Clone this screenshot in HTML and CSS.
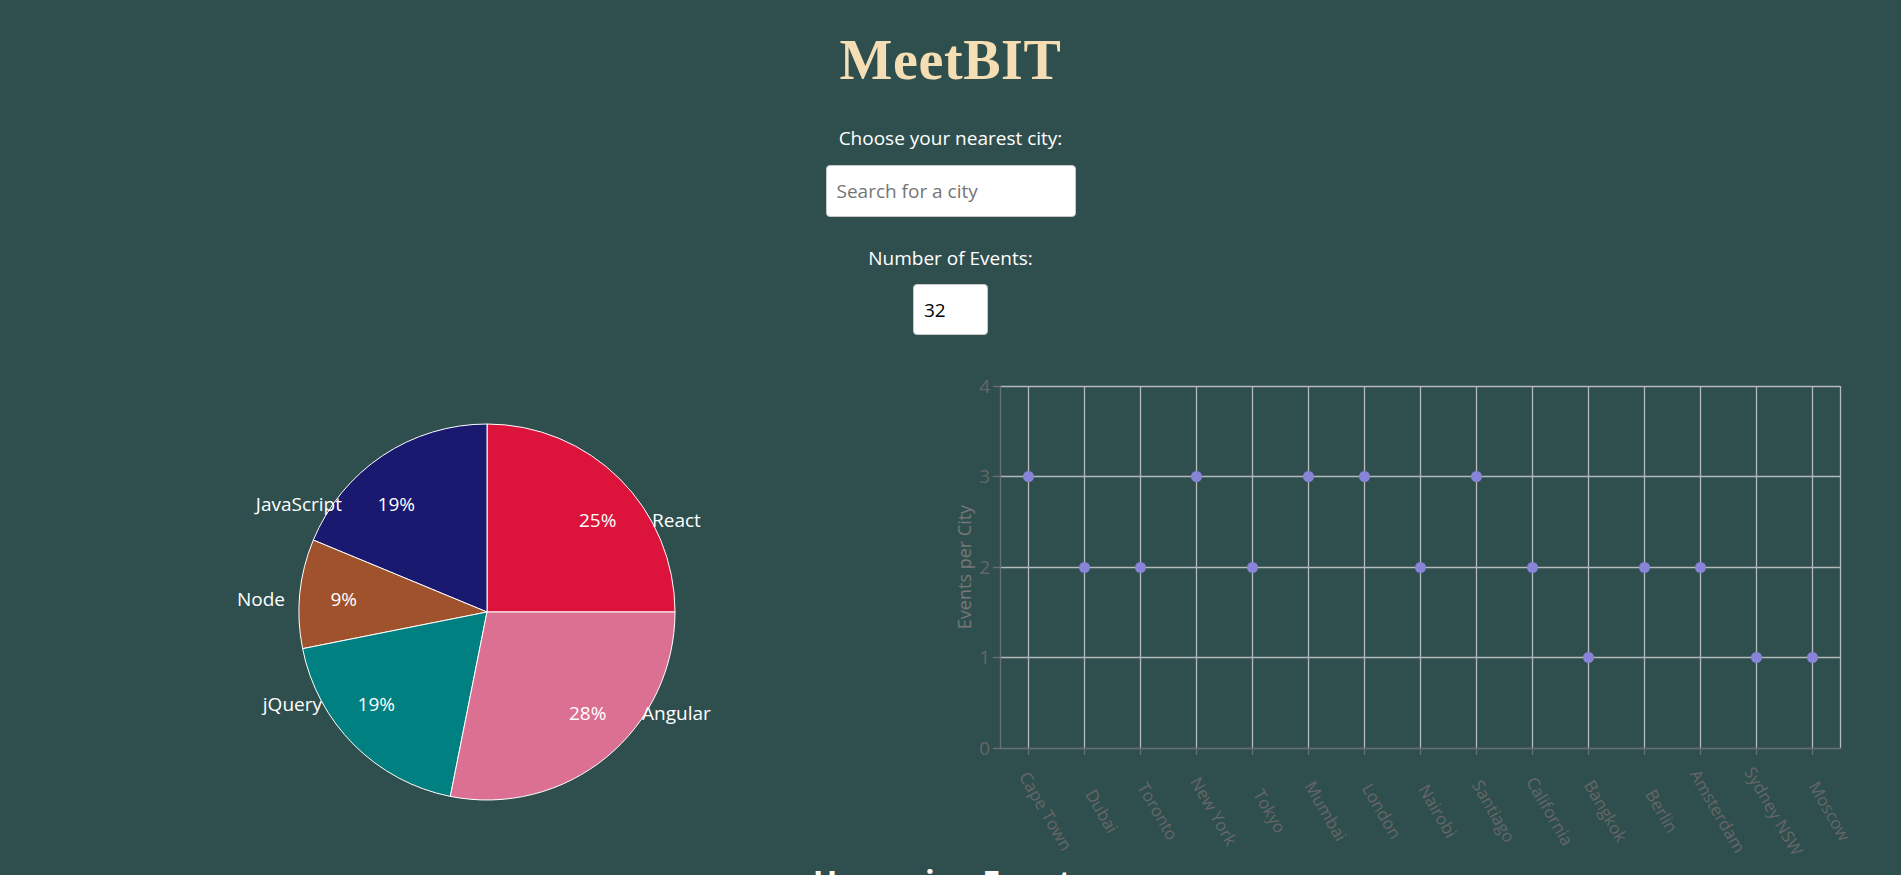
FILE: index.html
```html
<!DOCTYPE html>
<html lang="en">
<head>
<meta charset="utf-8">
<title>MeetBIT</title>
<link rel="stylesheet" href="styles.css">
</head>
<body>
<div class="app">
  <h1 class="title">MeetBIT</h1>
  <div class="search">
    <label class="field-label" for="city">Choose your nearest city:</label>
    <input id="city" class="city-input" type="text" placeholder="Search for a city">
  </div>
  <div class="number">
    <label class="field-label" for="num">Number of Events:</label>
    <input id="num" class="number-input" type="text" value="32">
  </div>
  <div class="charts">
    <svg class="pie-chart" width="950" height="520" viewBox="0 0 950 520">
      <g transform="translate(0 2)">
        <g class="slices" stroke="#fff" stroke-width="1">
          <path fill="#DC143C" d="M487,270 L675,270 A188,188 0 0,0 487,82 Z"/>
          <path fill="#191970" d="M487,270 L487,82 A188,188 0 0,0 313.31,198.06 Z"/>
          <path fill="#A0522D" d="M487,270 L313.31,198.06 A188,188 0 0,0 302.61,306.68 Z"/>
          <path fill="#008080" d="M487,270 L302.61,306.68 A188,188 0 0,0 450.32,454.39 Z"/>
          <path fill="#DB7093" d="M487,270 L450.32,454.39 A188,188 0 0,0 675,270 Z"/>
        </g>
        <g class="pie-labels">
          <text x="579" y="178" text-anchor="start">25%</text>
          <text x="652" y="178" text-anchor="start">React</text>
          <text x="415" y="162" text-anchor="end">19%</text>
          <text x="342" y="162" text-anchor="end">JavaScript</text>
          <text x="357" y="257" text-anchor="end">9%</text>
          <text x="285" y="257" text-anchor="end">Node</text>
          <text x="395" y="362" text-anchor="end">19%</text>
          <text x="322" y="362" text-anchor="end">jQuery</text>
          <text x="569" y="371" text-anchor="start">28%</text>
          <text x="642" y="371" text-anchor="start">Angular</text>
        </g>
      </g>
    </svg>
    <svg class="scatter-chart" width="951" height="520" viewBox="0 0 951 520">
      <g class="grid">
        <line x1="50" y1="46.5" x2="890" y2="46.5"/>
        <line x1="50" y1="136.5" x2="890" y2="136.5"/>
        <line x1="50" y1="227.5" x2="890" y2="227.5"/>
        <line x1="50" y1="317.5" x2="890" y2="317.5"/>
        <line x1="78.5" y1="46" x2="78.5" y2="408"/>
        <line x1="134.5" y1="46" x2="134.5" y2="408"/>
        <line x1="190.5" y1="46" x2="190.5" y2="408"/>
        <line x1="246.5" y1="46" x2="246.5" y2="408"/>
        <line x1="302.5" y1="46" x2="302.5" y2="408"/>
        <line x1="358.5" y1="46" x2="358.5" y2="408"/>
        <line x1="414.5" y1="46" x2="414.5" y2="408"/>
        <line x1="470.5" y1="46" x2="470.5" y2="408"/>
        <line x1="526.5" y1="46" x2="526.5" y2="408"/>
        <line x1="582.5" y1="46" x2="582.5" y2="408"/>
        <line x1="638.5" y1="46" x2="638.5" y2="408"/>
        <line x1="694.5" y1="46" x2="694.5" y2="408"/>
        <line x1="750.5" y1="46" x2="750.5" y2="408"/>
        <line x1="806.5" y1="46" x2="806.5" y2="408"/>
        <line x1="862.5" y1="46" x2="862.5" y2="408"/>
        <line x1="890.5" y1="46" x2="890.5" y2="408"/>
      </g>
      <g class="axis">
        <line x1="50.5" y1="46" x2="50.5" y2="408.5"/>
        <line x1="50" y1="408.5" x2="891" y2="408.5"/>
        <line x1="43" y1="46.5" x2="50" y2="46.5"/>
        <line x1="43" y1="136.5" x2="50" y2="136.5"/>
        <line x1="43" y1="227.5" x2="50" y2="227.5"/>
        <line x1="43" y1="317.5" x2="50" y2="317.5"/>
        <line x1="43" y1="408.5" x2="50" y2="408.5"/>
        <line x1="78.5" y1="408" x2="78.5" y2="415"/>
        <line x1="134.5" y1="408" x2="134.5" y2="415"/>
        <line x1="190.5" y1="408" x2="190.5" y2="415"/>
        <line x1="246.5" y1="408" x2="246.5" y2="415"/>
        <line x1="302.5" y1="408" x2="302.5" y2="415"/>
        <line x1="358.5" y1="408" x2="358.5" y2="415"/>
        <line x1="414.5" y1="408" x2="414.5" y2="415"/>
        <line x1="470.5" y1="408" x2="470.5" y2="415"/>
        <line x1="526.5" y1="408" x2="526.5" y2="415"/>
        <line x1="582.5" y1="408" x2="582.5" y2="415"/>
        <line x1="638.5" y1="408" x2="638.5" y2="415"/>
        <line x1="694.5" y1="408" x2="694.5" y2="415"/>
        <line x1="750.5" y1="408" x2="750.5" y2="415"/>
        <line x1="806.5" y1="408" x2="806.5" y2="415"/>
        <line x1="862.5" y1="408" x2="862.5" y2="415"/>
      </g>
      <g class="y-ticks">
        <text x="40" y="46">4</text>
        <text x="40" y="136">3</text>
        <text x="40" y="227">2</text>
        <text x="40" y="317">1</text>
        <text x="40" y="408">0</text>
      </g>
      <text class="y-title" x="14" y="227" transform="rotate(-90 14 227)">Events per City</text>
      <g class="x-ticks">
        <text x="96" y="471" transform="rotate(60 96 471)">Cape Town</text>
        <text x="152" y="471" transform="rotate(60 152 471)">Dubai</text>
        <text x="208" y="471" transform="rotate(60 208 471)">Toronto</text>
        <text x="264" y="471" transform="rotate(60 264 471)">New York</text>
        <text x="320" y="471" transform="rotate(60 320 471)">Tokyo</text>
        <text x="376" y="471" transform="rotate(60 376 471)">Mumbai</text>
        <text x="432" y="471" transform="rotate(60 432 471)">London</text>
        <text x="488" y="471" transform="rotate(60 488 471)">Nairobi</text>
        <text x="544" y="471" transform="rotate(60 544 471)">Santiago</text>
        <text x="600" y="471" transform="rotate(60 600 471)">California</text>
        <text x="656" y="471" transform="rotate(60 656 471)">Bangkok</text>
        <text x="712" y="471" transform="rotate(60 712 471)">Berlin</text>
        <text x="768" y="471" transform="rotate(60 768 471)">Amsterdam</text>
        <text x="824" y="471" transform="rotate(60 824 471)">Sydney NSW</text>
        <text x="880" y="471" transform="rotate(60 880 471)">Moscow</text>
      </g>
      <g class="dots">
        <circle cx="78.5" cy="136.5" r="5.5"/>
        <circle cx="134.5" cy="227.5" r="5.5"/>
        <circle cx="190.5" cy="227.5" r="5.5"/>
        <circle cx="246.5" cy="136.5" r="5.5"/>
        <circle cx="302.5" cy="227.5" r="5.5"/>
        <circle cx="358.5" cy="136.5" r="5.5"/>
        <circle cx="414.5" cy="136.5" r="5.5"/>
        <circle cx="470.5" cy="227.5" r="5.5"/>
        <circle cx="526.5" cy="136.5" r="5.5"/>
        <circle cx="582.5" cy="227.5" r="5.5"/>
        <circle cx="638.5" cy="317.5" r="5.5"/>
        <circle cx="694.5" cy="227.5" r="5.5"/>
        <circle cx="750.5" cy="227.5" r="5.5"/>
        <circle cx="806.5" cy="317.5" r="5.5"/>
        <circle cx="862.5" cy="317.5" r="5.5"/>
      </g>
    </svg>
  </div>
  <h2 class="section-title">Upcoming Events</h2>
</div>
</body>
</html>
```
FILE: styles.css
```css
html {
  scrollbar-width: none;
}
body {
  margin: 0;
  background: #2F4F4F;
  font-family: "Open Sans", "Noto Sans", sans-serif;
  color: #fff;
}
.app {
  display: flex;
  flex-direction: column;
  align-items: center;
}
.title {
  margin: 28px 0 0;
  font-family: "Liberation Serif", "Times New Roman", serif;
  font-weight: bold;
  font-size: 56px;
  line-height: 64px;
  letter-spacing: 0.6px;
  color: #F5DEB3;
}
.search,
.number {
  display: flex;
  flex-direction: column;
  align-items: center;
}
.search {
  margin-top: 33px;
}
.number {
  margin-top: 28px;
}
.field-label {
  font-size: 19px;
  line-height: 26px;
  color: #fff;
}
.city-input,
.number-input {
  box-sizing: border-box;
  background: #fff;
  border: 1px solid #c8c8c8;
  border-radius: 4px;
  font-family: "Open Sans", "Noto Sans", sans-serif;
  font-size: 19px;
  color: #000;
  padding: 0 10px;
  outline: none;
}
.city-input {
  margin-top: 14px;
  width: 250px;
  height: 52px;
}
.city-input::placeholder {
  color: #757575;
}
.number-input {
  margin-top: 13px;
  width: 75px;
  height: 51px;
}
.charts {
  margin-top: 5px;
  display: flex;
  width: 100%;
}
.pie-chart,
.scatter-chart {
  display: block;
  flex: none;
}
.pie-labels text {
  font-family: "Open Sans", "Noto Sans", sans-serif;
  font-size: 19px;
  fill: #fff;
  dominant-baseline: central;
}
.grid line {
  stroke: #b4b9b9;
  stroke-width: 1.3;
}
.axis line {
  stroke: #6b6f6f;
  stroke-width: 1.3;
}
.y-ticks text {
  font-family: "Open Sans", "Noto Sans", sans-serif;
  font-size: 19px;
  fill: #666;
  text-anchor: end;
  dominant-baseline: central;
}
.y-title {
  font-family: "Open Sans", "Noto Sans", sans-serif;
  font-size: 18px;
  fill: #777;
  text-anchor: middle;
  dominant-baseline: central;
}
.x-ticks text {
  font-family: "Open Sans", "Noto Sans", sans-serif;
  font-size: 17px;
  fill: #666;
  text-anchor: middle;
  dominant-baseline: central;
}
.dots circle {
  fill: #8884d8;
}
.section-title {
  margin: 0;
  font-size: 32px;
  line-height: 44px;
  font-weight: bold;
  color: #fff;
}
```
